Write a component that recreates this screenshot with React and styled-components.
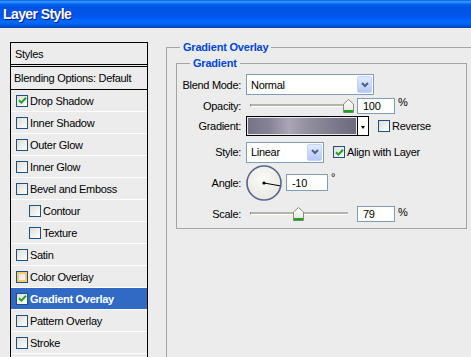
import React from "react";
import styled, { createGlobalStyle } from "styled-components";

const GlobalStyle = createGlobalStyle`
  html, body {
    margin: 0;
    padding: 0;
  }
  body {
    background: #ececec;
    font-family: "Liberation Sans", Arial, sans-serif;
    font-size: 11px;
    letter-spacing: -0.3px;
    color: #000;
  }
`;

const styleItems = [
  { label: "Drop Shadow", checked: true },
  { label: "Inner Shadow" },
  { label: "Outer Glow" },
  { label: "Inner Glow" },
  { label: "Bevel and Emboss" },
  { label: "Contour", indent: true },
  { label: "Texture", indent: true },
  { label: "Satin" },
  { label: "Color Overlay", hover: true },
  { label: "Gradient Overlay", checked: true, active: true },
  { label: "Pattern Overlay" },
  { label: "Stroke" },
  { label: "" },
];

function Check({ checked, hover }) {
  return (
    <CheckBox $hover={hover}>
      {checked && (
        <svg width="9" height="9" viewBox="0 0 9 9">
          <path d="M1 4.2 L3.4 6.6 L8 1.8" fill="none" stroke="#21a121" strokeWidth="2" />
        </svg>
      )}
    </CheckBox>
  );
}

function Chevron() {
  return (
    <svg width="8" height="6" viewBox="0 0 8 6">
      <path d="M1 1 L4 4 L7 1" fill="none" stroke="#4d6185" strokeWidth="2" />
    </svg>
  );
}

function Slider({ value, min, max }) {
  const pct = (value - min) / (max - min);
  return (
    <SliderWrap>
      <Track />
      <Thumb style={{ left: `${pct * 98 - 5.5}px` }}>
        <svg width="11" height="14" viewBox="0 0 11 14">
          <defs>
            <linearGradient id="tg" x1="0" y1="0" x2="0" y2="1">
              <stop offset="0" stopColor="#ffffff" />
              <stop offset="1" stopColor="#e4e3dc" />
            </linearGradient>
          </defs>
          <path d="M0.5 5 L5.5 0.5 L10.5 5 L10.5 13.5 L0.5 13.5 Z" fill="url(#tg)" stroke="#8a8a80" />
          <rect x="1" y="11" width="9" height="2.5" fill="#21a121" />
        </svg>
      </Thumb>
    </SliderWrap>
  );
}

function AngleDial({ angle }) {
  const r = (-angle * Math.PI) / 180;
  const x2 = 18 + 16.5 * Math.cos(r);
  const y2 = 18 + 16.5 * Math.sin(r);
  return (
    <svg width="36" height="36" viewBox="0 0 36 36">
      <defs>
        <radialGradient id="dg" cx="0.45" cy="0.4" r="0.7">
          <stop offset="0" stopColor="#fbfbf8" />
          <stop offset="1" stopColor="#e6e5de" />
        </radialGradient>
      </defs>
      <circle cx="18" cy="18" r="17" fill="url(#dg)" stroke="#55658c" strokeWidth="1.6" />
      <line x1="18" y1="18" x2={x2} y2={y2} stroke="#000" strokeWidth="1" />
      <circle cx="18" cy="18" r="1.6" fill="#000" />
    </svg>
  );
}

export default function App() {
  return (
    <>
      <GlobalStyle />
      <Window>
        <TitleBar>Layer Style</TitleBar>
        <Body>
          <StyleList>
            <ListHeader>Styles</ListHeader>
            <ListRow>Blending Options: Default</ListRow>
            {styleItems.map((item, i) => (
              <StyleRow key={i} $indent={item.indent} $active={item.active}>
                {item.label && <Check checked={item.checked} hover={item.hover} />}
                {item.label}
              </StyleRow>
            ))}
          </StyleList>

          <OuterGroup>
            <Legend $offset={4}>Gradient Overlay</Legend>
            <InnerGroup>
              <Legend $offset={13}>Gradient</Legend>

              <Row $h={21}>
                <Label>Blend Mode:</Label>
                <Select $w={128}>
                  Normal
                  <SelectButton>
                    <Chevron />
                  </SelectButton>
                </Select>
              </Row>

              <Row $h={21}>
                <Label>Opacity:</Label>
                <Slider value={100} min={0} max={100} />
                <Field $w={38} $gap={9}>100</Field>
                <Unit>%</Unit>
              </Row>

              <Row $h={20}>
                <Label>Gradient:</Label>
                <GradientPicker>
                  <GradientFill />
                  <GradientArrow />
                </GradientPicker>
                <CheckLabel $gap={9}>
                  <Check />
                  Reverse
                </CheckLabel>
              </Row>

              <Row $h={22} $top={5}>
                <Label>Style:</Label>
                <Select $w={78}>
                  Linear
                  <SelectButton>
                    <Chevron />
                  </SelectButton>
                </Select>
                <CheckLabel $gap={9}>
                  <Check checked />
                  Align with Layer
                </CheckLabel>
              </Row>

              <Row $h={37} $top={1}>
                <Label>Angle:</Label>
                <AngleDial angle={-10} />
                <Field $w={42} $gap={4} $h={17}>-10</Field>
                <Degree>°</Degree>
              </Row>

              <Row $h={17} $top={4}>
                <Label>Scale:</Label>
                <Slider value={79} min={10} max={150} />
                <Field $w={38} $gap={9}>79</Field>
                <Unit>%</Unit>
              </Row>
            </InnerGroup>
          </OuterGroup>
        </Body>
      </Window>
    </>
  );
}

const Window = styled.div`
  width: 471px;
  height: 357px;
  overflow: hidden;
  background: #ececec;
`;

const TitleBar = styled.div`
  height: 28px;
  box-sizing: border-box;
  padding: 5px 0 0 3px;
  background: linear-gradient(
    to bottom,
    #0058ee 0%,
    #3a93ff 5%,
    #288eff 8%,
    #127dff 11%,
    #0262ee 16%,
    #0057e5 24%,
    #0054e3 30%,
    #0055eb 56%,
    #005bf5 66%,
    #026afe 76%,
    #0062ef 86%,
    #0052d6 93%,
    #0040ab 100%
  );
  color: #fff;
  font-size: 14px;
  font-weight: bold;
  letter-spacing: -0.6px;
  line-height: 18px;
  text-shadow: 1px 1px 0 #0a1883;
`;

const Body = styled.div`
  display: flex;
  align-items: flex-start;
  padding-left: 10px;
`;

const StyleList = styled.div`
  margin-top: 14px;
  width: 138px;
  height: 340px;
  box-sizing: border-box;
  border: 1px solid #000;
  border-bottom: none;
  flex-shrink: 0;
`;

const ListHeader = styled.div`
  height: 21px;
  display: flex;
  align-items: center;
  padding-left: 4px;
  border-bottom: 3px double #000;
`;

const ListRow = styled.div`
  height: 22px;
  display: flex;
  align-items: center;
  padding-left: 3px;
  border-bottom: 1px solid #000;
`;

const StyleRow = styled.div`
  height: 21px;
  display: flex;
  align-items: center;
  gap: 2px;
  padding-left: ${(p) => (p.$indent ? 18 : 5)}px;
  border-bottom: 1px solid #fff;
  background: ${(p) => (p.$active ? "#316ac5" : "transparent")};
  color: ${(p) => (p.$active ? "#fff" : "#000")};
  font-weight: ${(p) => (p.$active ? "bold" : "normal")};
`;

const CheckBox = styled.span`
  width: 12px;
  height: 12px;
  box-sizing: border-box;
  border: 1px solid #1c5180;
  background: linear-gradient(135deg, #dcdcd7, #ffffff);
  display: inline-flex;
  align-items: center;
  justify-content: center;
  flex-shrink: 0;
  box-shadow: ${(p) => (p.$hover ? "inset 0 0 0 2px #f9c96a" : "none")};
`;

const OuterGroup = styled.fieldset`
  margin: 12px 0 0 18px;
  padding: 2px 0 0 9px;
  border: 1px solid #a4a4a4;
  width: 330px;
  height: 400px;
  box-sizing: border-box;
  min-width: 0;
  flex-shrink: 0;
`;

const InnerGroup = styled.fieldset`
  margin: 0;
  padding: 4px 0 0 0;
  border: 1px solid #a4a4a4;
  width: 291px;
  height: 173px;
  box-sizing: border-box;
  min-width: 0;
`;

const Legend = styled.legend`
  margin-left: ${(p) => p.$offset}px;
  padding: 0 3px;
  font-weight: bold;
  color: #0046d5;
  line-height: 14px;
  letter-spacing: -0.2px;
`;

const Row = styled.div`
  display: flex;
  align-items: center;
  height: ${(p) => p.$h}px;
  margin-top: ${(p) => p.$top || 0}px;
`;

const Label = styled.span`
  width: 64px;
  margin-right: 5px;
  text-align: right;
  flex-shrink: 0;
`;

const Select = styled.div`
  width: ${(p) => p.$w}px;
  height: 21px;
  box-sizing: border-box;
  border: 1px solid #7f9db9;
  background: #fff;
  display: flex;
  align-items: center;
  justify-content: space-between;
  padding: 0 1px 0 4px;
`;

const SelectButton = styled.span`
  width: 15px;
  height: 17px;
  box-sizing: border-box;
  border-radius: 2px;
  border: 1px solid #c3d3fd;
  background: linear-gradient(#e3ebfd, #b4c8f6);
  display: flex;
  align-items: center;
  justify-content: center;
`;

const SliderWrap = styled.div`
  position: relative;
  width: 98px;
  height: 14px;
  margin-left: 4px;
  display: flex;
  align-items: center;
`;

const Track = styled.div`
  width: 100%;
  height: 2px;
  background: #b5b4a8;
  border-bottom: 1px solid #fff;
  border-left: 1px solid #8a8a80;
`;

const Thumb = styled.div`
  position: absolute;
  top: 0;
  width: 11px;
  height: 14px;
  display: flex;
`;

const Field = styled.div`
  width: ${(p) => p.$w}px;
  height: ${(p) => p.$h || 16}px;
  margin-left: ${(p) => p.$gap}px;
  box-sizing: border-box;
  border: 1px solid #7f9db9;
  background: #fff;
  padding-left: 5px;
  display: flex;
  align-items: center;
  flex-shrink: 0;
`;

const Unit = styled.span`
  margin-left: 3px;
  align-self: flex-start;
  margin-top: 1px;
`;

const Degree = styled.span`
  margin-left: 3px;
  align-self: flex-start;
  margin-top: 7px;
`;

const GradientPicker = styled.div`
  width: 123px;
  height: 20px;
  box-sizing: border-box;
  border: 1px solid #000;
  background: #fff;
  display: flex;
`;

const GradientFill = styled.div`
  flex: 1;
  border-right: 1px solid #000;
  box-shadow: inset 0 0 0 1px #e8e8e8;
  background: linear-gradient(
    90deg,
    #777387 0%,
    #858296 20%,
    #aaa6b6 38%,
    #928fa0 55%,
    #7c798c 80%,
    #6c697b 100%
  );
`;

const GradientArrow = styled.div`
  width: 10px;
  display: flex;
  align-items: center;
  justify-content: center;
  &::after {
    content: "";
    margin-top: 3px;
    border-left: 2.5px solid transparent;
    border-right: 2.5px solid transparent;
    border-top: 3px solid #000;
  }
`;

const CheckLabel = styled.label`
  display: flex;
  align-items: center;
  gap: 2px;
  margin-left: ${(p) => p.$gap}px;
`;
